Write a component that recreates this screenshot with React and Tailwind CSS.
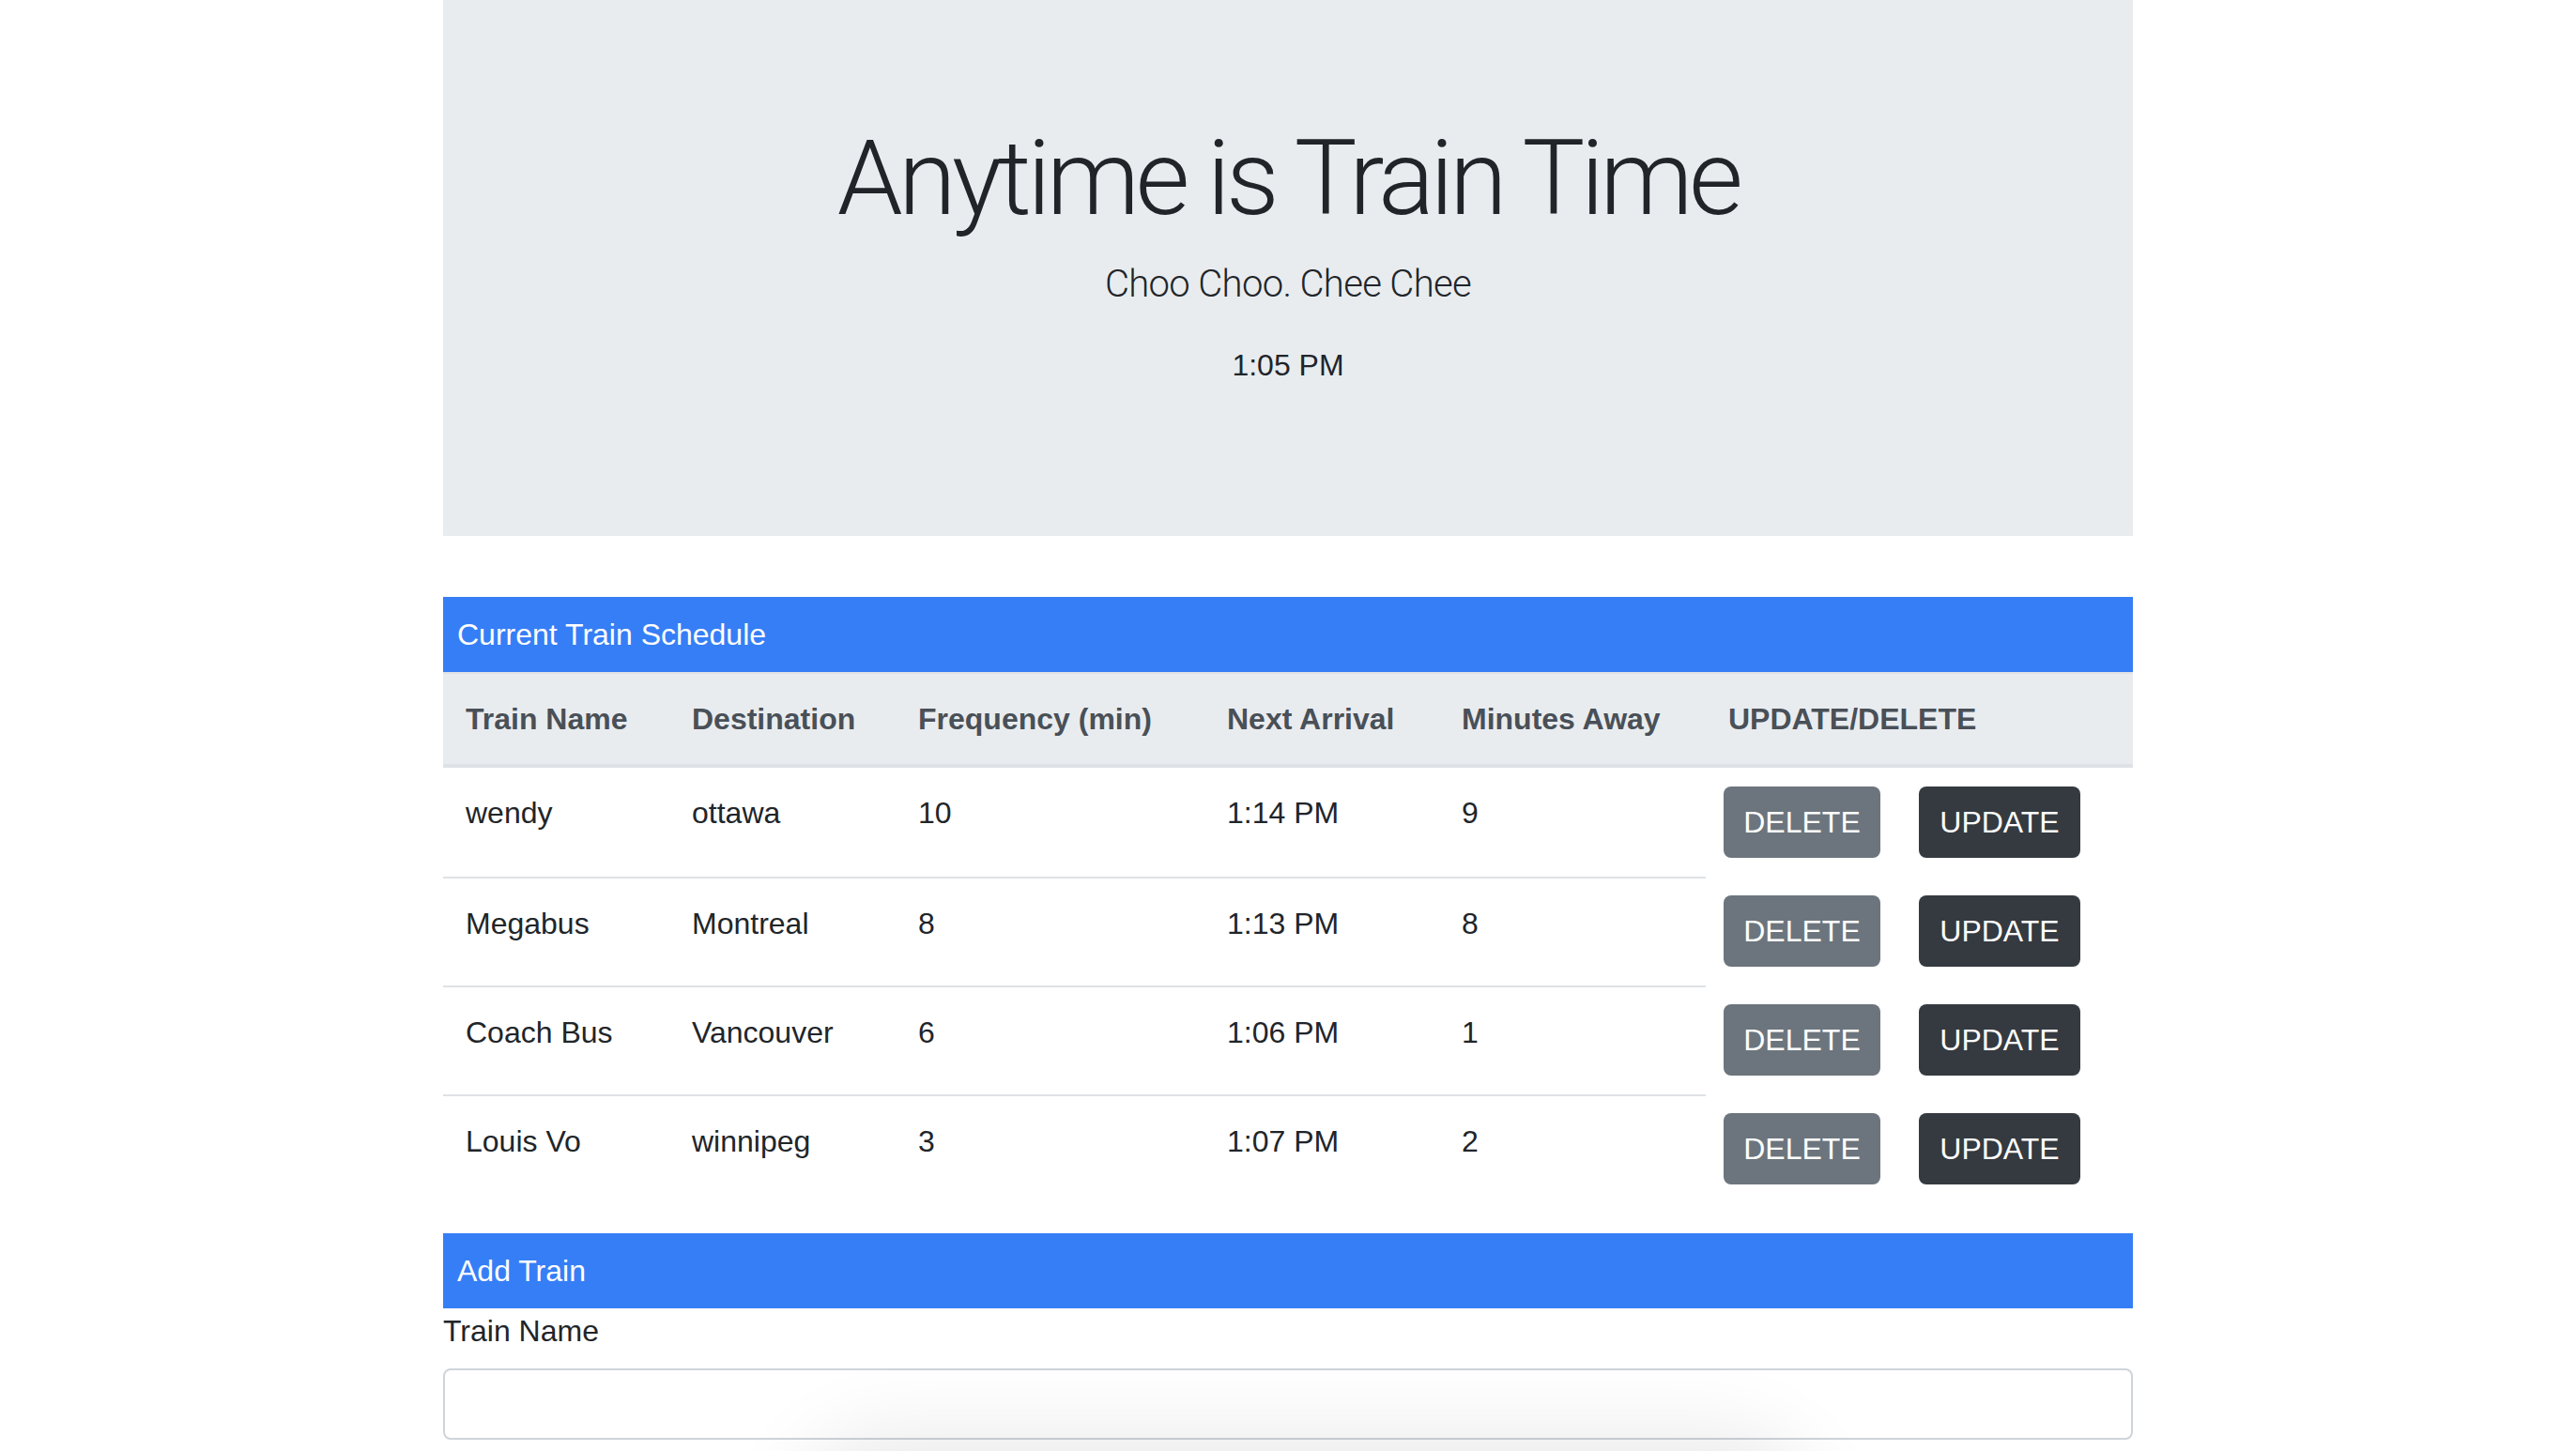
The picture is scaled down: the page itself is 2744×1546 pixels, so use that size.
import React from 'react';

const trains = [
  { name: 'wendy', destination: 'ottawa', frequency: 10, next: '1:14 PM', away: 9 },
  { name: 'Megabus', destination: 'Montreal', frequency: 8, next: '1:13 PM', away: 8 },
  { name: 'Coach Bus', destination: 'Vancouver', frequency: 6, next: '1:06 PM', away: 1 },
  { name: 'Louis Vo', destination: 'winnipeg', frequency: 3, next: '1:07 PM', away: 2 },
];

const headers = ['Train Name', 'Destination', 'Frequency (min)', 'Next Arrival', 'Minutes Away', 'UPDATE/DELETE'];

const App = () => {
  return (
    <div className="relative min-h-screen bg-white text-[#212529] font-['Liberation_Sans',Arial,sans-serif] text-[32px] leading-[48px] overflow-hidden">
      <div className="w-[1800px] mx-auto">
        {/* Jumbotron */}
        <div className="bg-[#e9ecef] h-[571px] pt-[123px] text-center">
          <h1 className="font-['Roboto',sans-serif] font-light text-[112px] leading-[134px] tracking-[-0.041em] mb-[16px]">
            Anytime is Train Time
          </h1>
          <p className="font-['Roboto',sans-serif] font-light text-[40px] leading-[60px] tracking-[-0.016em] mb-[32px]">
            Choo Choo. Chee Chee
          </p>
          <p>1:05 PM</p>
        </div>

        {/* Schedule */}
        <div className="mt-[65px]">
          <div className="bg-[#367ef6] text-white h-[80px] px-[15px] py-[16px]">Current Train Schedule</div>
          <table className="w-full table-fixed border-separate border-spacing-0">
            <colgroup>
              <col className="w-[241px]" />
              <col className="w-[241px]" />
              <col className="w-[329px]" />
              <col className="w-[250px]" />
              <col className="w-[284px]" />
              <col />
            </colgroup>
            <thead>
              <tr>
                {headers.map((h) => (
                  <th
                    key={h}
                    className="bg-[#e9ecef] text-[#495057] font-bold text-left align-top px-[24px] pt-[24px] pb-[24px] border-t-2 border-b-4 border-[#dee2e6] whitespace-nowrap"
                  >
                    {h}
                  </th>
                ))}
              </tr>
            </thead>
            <tbody>
              {trains.map((t, i) => {
                const cell = `align-top px-[24px] pt-[24px] ${i > 0 ? 'border-t-2 border-[#dee2e6]' : ''}`;
                return (
                  <tr key={t.name}>
                    <td className={cell}>{t.name}</td>
                    <td className={cell}>{t.destination}</td>
                    <td className={cell}>{t.frequency}</td>
                    <td className={cell}>{t.next}</td>
                    <td className={cell}>{t.away}</td>
                    <td className="align-top pl-[19px] pt-[20px] pb-[20px]">
                      <div className="flex gap-[41px]">
                        <button className="w-[167px] h-[76px] rounded-[8px] bg-[#6c757d] text-white text-[32px] leading-[48px]">
                          DELETE
                        </button>
                        <button className="w-[172px] h-[76px] rounded-[8px] bg-[#343a40] text-white text-[32px] leading-[48px]">
                          UPDATE
                        </button>
                      </div>
                    </td>
                  </tr>
                );
              })}
            </tbody>
          </table>
        </div>

        {/* Add Train */}
        <div className="mt-[32px]">
          <div className="bg-[#367ef6] text-white h-[80px] px-[15px] py-[16px]">Add Train</div>
          <label className="block mb-[16px]">Train Name</label>
          <input
            type="text"
            className="block w-full h-[76px] border-2 border-[#ced4da] rounded-[8px] bg-white px-[24px] outline-none"
          />
        </div>
      </div>

      {/* soft shadow overlay near bottom edge */}
      <div className="pointer-events-none absolute left-[900px] top-[1580px] w-[980px] h-[80px] rounded-full shadow-[0_0_90px_50px_rgba(0,0,0,0.09)]" />
    </div>
  );
};

export default App;
